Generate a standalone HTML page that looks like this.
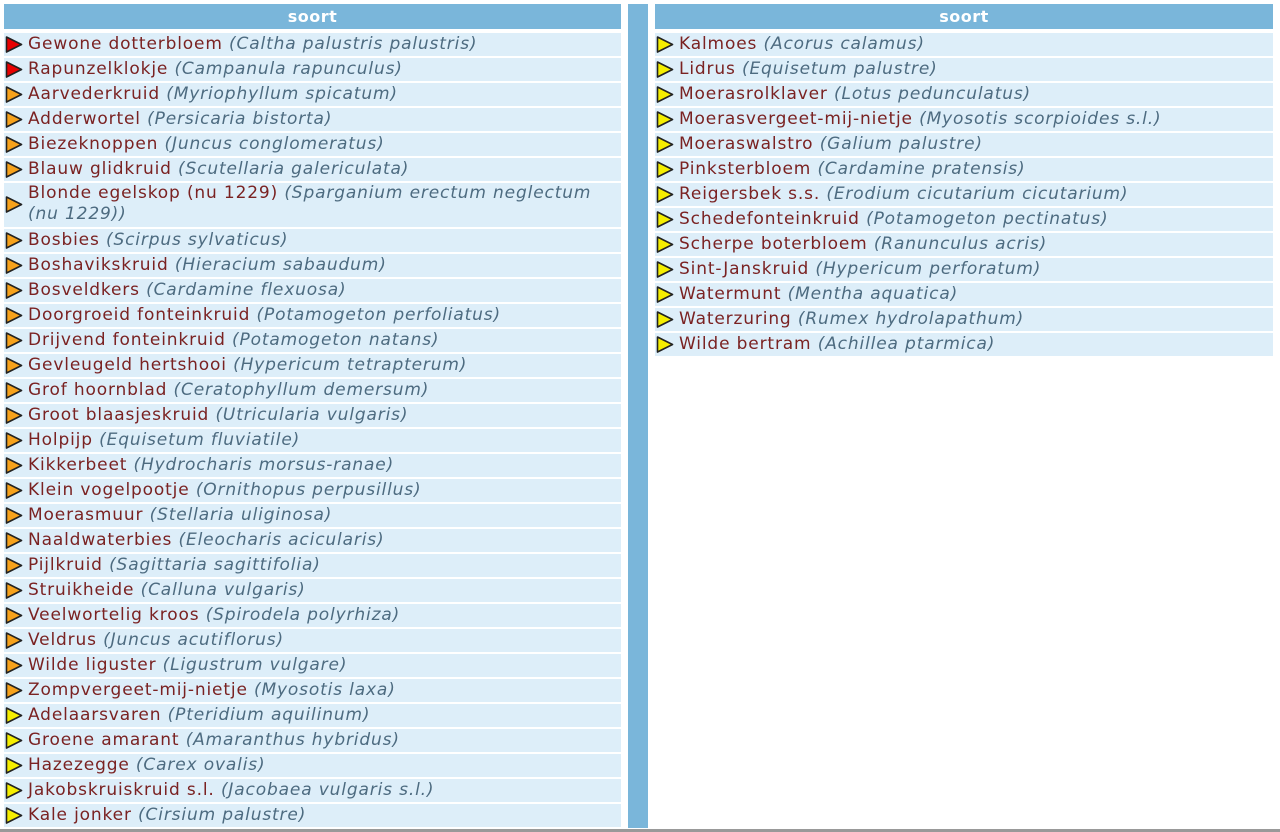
<!DOCTYPE html>
<html><head><meta charset="utf-8"><style>
body{margin:0;width:1280px;height:832px;background:#fff;position:relative;overflow:hidden;font-family:"DejaVu Sans","Liberation Sans",sans-serif;}
.col{position:absolute;top:4px;}
.hd{height:25px;background:#7ab6da;color:#fff;font-weight:bold;font-size:16px;text-align:center;line-height:25px;margin-bottom:4px;letter-spacing:0.5px}
.r{position:relative;height:23px;background:#ddeef9;margin-bottom:2px;line-height:22px;font-size:17px;padding-left:24px;padding-right:10px;color:#7a2222;white-space:nowrap;letter-spacing:0.85px}
.r.two{height:44px;white-space:normal;line-height:21px}
.r i{color:#4d6b80;}
.r svg{position:absolute;left:1px;top:3px}
.r.two svg{top:13px}
.sep{position:absolute;left:628px;top:4px;width:20px;height:824px;background:#7ab6da}
.bot{position:absolute;left:0;top:829px;width:1280px;height:3px;background:#999}
</style></head><body>
<div class="sep"></div>
<div class="col" id="L" style="left:4px;width:617px"><div class="hd">soort</div></div>
<div class="col" id="R" style="left:655px;width:618px"><div class="hd">soort</div></div>
<div class="bot"></div>
<script>
var c={r:'#e80000',o:'#f7a21b',y:'#f5ee00'};
function tri(k){return '<svg width="18" height="17" viewBox="0 0 18 17"><path d="M1.5 1 L16.5 8.5 L1.5 16 Z" fill="'+c[k]+'" stroke="#222" stroke-width="1.6" stroke-linejoin="round"/></svg>';}
var L=[['r','Gewone dotterbloem','Caltha palustris palustris'],['r','Rapunzelklokje','Campanula rapunculus'],['o','Aarvederkruid','Myriophyllum spicatum'],['o','Adderwortel','Persicaria bistorta'],['o','Biezeknoppen','Juncus conglomeratus'],['o','Blauw glidkruid','Scutellaria galericulata'],['o','Blonde egelskop (nu 1229)','Sparganium erectum neglectum (nu 1229)',1],['o','Bosbies','Scirpus sylvaticus'],['o','Boshavikskruid','Hieracium sabaudum'],['o','Bosveldkers','Cardamine flexuosa'],['o','Doorgroeid fonteinkruid','Potamogeton perfoliatus'],['o','Drijvend fonteinkruid','Potamogeton natans'],['o','Gevleugeld hertshooi','Hypericum tetrapterum'],['o','Grof hoornblad','Ceratophyllum demersum'],['o','Groot blaasjeskruid','Utricularia vulgaris'],['o','Holpijp','Equisetum fluviatile'],['o','Kikkerbeet','Hydrocharis morsus-ranae'],['o','Klein vogelpootje','Ornithopus perpusillus'],['o','Moerasmuur','Stellaria uliginosa'],['o','Naaldwaterbies','Eleocharis acicularis'],['o','Pijlkruid','Sagittaria sagittifolia'],['o','Struikheide','Calluna vulgaris'],['o','Veelwortelig kroos','Spirodela polyrhiza'],['o','Veldrus','Juncus acutiflorus'],['o','Wilde liguster','Ligustrum vulgare'],['o','Zompvergeet-mij-nietje','Myosotis laxa'],['y','Adelaarsvaren','Pteridium aquilinum'],['y','Groene amarant','Amaranthus hybridus'],['y','Hazezegge','Carex ovalis'],['y','Jakobskruiskruid s.l.','Jacobaea vulgaris s.l.'],['y','Kale jonker','Cirsium palustre']];
var R=[['y','Kalmoes','Acorus calamus'],['y','Lidrus','Equisetum palustre'],['y','Moerasrolklaver','Lotus pedunculatus'],['y','Moerasvergeet-mij-nietje','Myosotis scorpioides s.l.'],['y','Moeraswalstro','Galium palustre'],['y','Pinksterbloem','Cardamine pratensis'],['y','Reigersbek s.s.','Erodium cicutarium cicutarium'],['y','Schedefonteinkruid','Potamogeton pectinatus'],['y','Scherpe boterbloem','Ranunculus acris'],['y','Sint-Janskruid','Hypericum perforatum'],['y','Watermunt','Mentha aquatica'],['y','Waterzuring','Rumex hydrolapathum'],['y','Wilde bertram','Achillea ptarmica']];
function fill(id,a){var h='';a.forEach(function(x){var lat=x[3]?'Sparganium erectum neglectum<br>(nu 1229)':x[2];h+='<div class="r'+(x[3]?' two':'')+'">'+tri(x[0])+x[1]+' <i>('+lat+')</i></div>';});document.getElementById(id).insertAdjacentHTML('beforeend',h);}
fill('L',L);fill('R',R);
</script>
</body></html>
